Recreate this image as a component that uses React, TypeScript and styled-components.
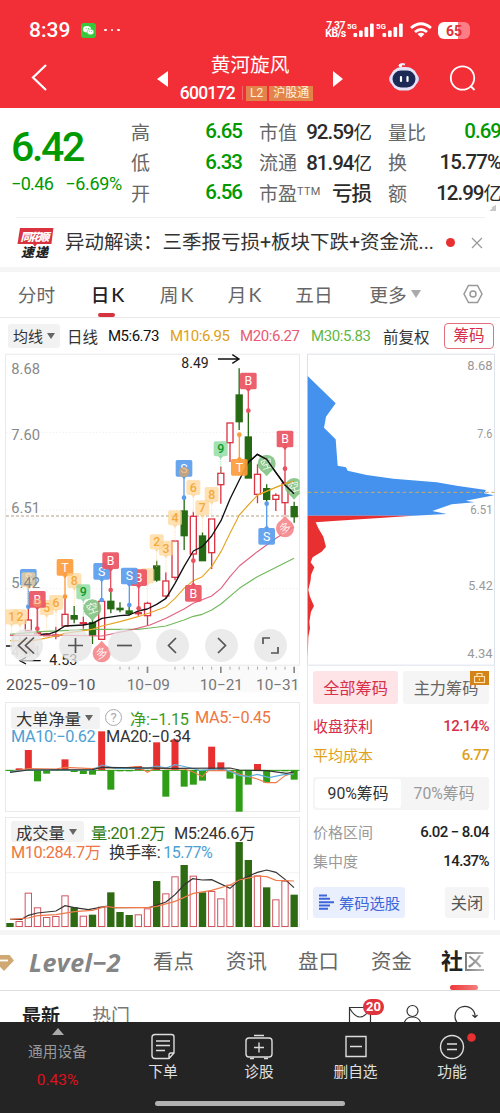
import React from "react";
import styled, { createGlobalStyle } from "styled-components";

const RED = "#e93030";
const GREEN = "#009900";

const Global = createGlobalStyle`
  * { box-sizing: border-box; }
  body {
    margin: 0;
    background: #fff;
    font-family: Roboto, "Noto Sans CJK SC", sans-serif;
    color: #333;
  }
`;

const Screen = styled.div`
  width: 500px;
  height: 1113px;
  overflow: hidden;
  background: #fff;
  display: flex;
  flex-direction: column;
  white-space: nowrap;
`;

const Num = styled.span<{ $size: number; $ls?: number; $color?: string; $weight?: number; $ml?: number }>`
  font-size: ${(p) => p.$size}px;
  letter-spacing: ${(p) => p.$ls ?? 0}px;
  color: ${(p) => p.$color ?? "inherit"};
  font-weight: ${(p) => p.$weight ?? 500};
  margin-left: ${(p) => p.$ml ?? 0}px;
`;

/* ---------- header ---------- */

const Header = styled.header`
  flex: none;
  height: 108px;
  background: #f22f37;
  color: #fff;
`;

const StatusBar = styled.div`
  height: 48px;
  padding: 12px 30px 0 29px;
  display: flex;
  align-items: center;
`;

const Clock = styled.span`
  width: 52px;
  font-size: 21px;
  font-weight: 500;
  line-height: 36px;
`;

const StatusDots = styled.span`
  margin-left: 8px;
  flex: 1;
  display: flex;
  gap: 4px;
  i { width: 2.5px; height: 2.5px; border-radius: 1.2px; background: #fff; }
`;

const Speed = styled.span`
  width: 23px;
  font-size: 10.5px;
  line-height: 8.5px;
  font-weight: 700;
  letter-spacing: -0.6px;
  text-align: center;
`;

const Battery = styled.span`
  width: 32px;
  height: 17px;
  margin-left: 6px;
  border-radius: 6px;
  background: linear-gradient(90deg, #fff 63%, #fb7d85 63%);
  color: #e03038;
  font-size: 14px;
  line-height: 18px;
  font-weight: 700;
  text-align: center;
`;

const TitleBar = styled.div`
  height: 60px;
  display: grid;
  grid-template-columns: 150px 193px 157px;
`;

const TitleSide = styled.div<{ $left: number }>`
  padding: 10px 0 0 ${(p) => p.$left}px;
`;

const TitleCenter = styled.div`
  display: grid;
  grid-template-columns: 24px 156px 13px;
`;

const Arrow = styled.i<{ $dir: "left" | "right" }>`
  align-self: center;
  margin-top: 1px;
  justify-self: ${(p) => (p.$dir === "left" ? "center" : "end")};
  border: solid transparent;
  border-width: 8px 0;
  ${(p) => (p.$dir === "left" ? "border-right: 11px solid #fff;" : "border-left: 10px solid #fff;")}
`;

const StockName = styled.div`
  display: flex;
  flex-direction: column;
  align-items: center;
  h1 { margin: 4px 0 0 -4px; font-size: 19.7px; line-height: 28px; font-weight: 400; }
`;

const StockCode = styled.div`
  display: flex;
  align-items: center;
  height: 24px;
  gap: 2px;
  margin: 1px 0 0 -11px;
`;

const Tag = styled.span`
  background: #e2834b;
  font-size: 12px;
  line-height: 15px;
  height: 15px;
  padding: 0 4px;
  color: #fff0d8;
`;

/* ---------- quote summary ---------- */

const Quote = styled.section`
  flex: none;
  height: 109px;
  display: grid;
  grid-template-columns: 131px 110px 18px 111px 18px 112px;
  grid-template-rows: 109px;
`;

const Price = styled.div`
  grid-area: 1 / 1;
  padding: 15px 0 0 11px;
  color: ${GREEN};
  display: flex;
  flex-direction: column;
`;

const Changes = styled.div`
  display: flex;
  gap: 12px;
  margin-top: 2px;
`;

const StatColumn = styled.div<{ $col: number }>`
  grid-area: 1 / ${(p) => p.$col};
  padding-top: 8px;
`;

const ExpandCorner = styled.i`
  grid-area: 1 / 6;
  place-self: end;
  margin: 0 4px 6px 0;
  width: 7px;
  height: 7px;
  background: linear-gradient(135deg, transparent 50%, #c8c8c8 50%);
`;

const Stat = styled.div<{ $good?: boolean }>`
  height: 30.5px;
  display: flex;
  justify-content: space-between;
  align-items: center;
  font-size: 19px;
  color: #666;
  sup { font-size: 11px; line-height: 0; vertical-align: 6px; letter-spacing: 0.3px; }
  b {
    font-size: 20.5px;
    letter-spacing: -1px;
    margin-right: -1px;
    font-weight: 500;
    color: ${(p) => (p.$good ? GREEN : "#2b2b2b")};
  }
  em { font-style: normal; font-size: 18.5px; font-weight: 400; }
`;

const News = styled.section`
  flex: none;
  height: 50px;
  margin: 0 15px 0 16px;
  border-top: 1px solid #eee;
  display: flex;
  align-items: center;
`;

const NewsTitle = styled.span`
  margin-left: 10px;
  width: 376px;
  font-size: 19.5px;
  line-height: 28px;
  color: #333;
`;

const RedDot = styled.i`
  width: 9px;
  height: 9px;
  border-radius: 50%;
  background: ${RED};
  margin-left: 6px;
`;

const Gap = styled.div`
  flex: none;
  height: 5px;
  background: #f5f5f5;
`;

/* ---------- period tabs and averages ---------- */

const PeriodTabs = styled.nav`
  flex: none;
  height: 46px;
  border-bottom: 1px solid #e8e8e8;
  display: grid;
  grid-template-columns: 73px 69px 69px 67px 72px 90px 66px;
`;

const PeriodTab = styled.span<{ $active?: boolean }>`
  display: flex;
  align-items: center;
  justify-content: center;
  gap: 4px;
  padding-bottom: 2px;
  font-size: 18.7px;
  color: ${(p) => (p.$active ? "#222" : "#666")};
  font-weight: ${(p) => (p.$active ? 500 : 400)};
  position: relative;
  &::after {
    content: "";
    display: ${(p) => (p.$active ? "block" : "none")};
    position: absolute;
    bottom: 0;
    left: 25px;
    width: 17px;
    height: 4px;
    border-radius: 2px;
    background: #d63340;
  }
`;

const KLetter = styled.span`
  font-family: Lato, sans-serif;
  font-size: 19.5px;
  margin: 1px 0 0 -2px;
`;

const Caret = styled.i<{ $w: number; $h: number; $color: string }>`
  border: solid transparent;
  border-width: 0 ${(p) => p.$w / 2}px;
  border-top: ${(p) => p.$h}px solid ${(p) => p.$color};
`;

const Averages = styled.div`
  flex: none;
  height: 34px;
  padding: 1px 6px 0 8px;
  display: grid;
  grid-template-columns: 59px 41px 62px 70px 71px 72px 61px 50px;
  align-items: center;
  font-size: 15.5px;
`;

const Dropdown = styled.span<{ $w: number; $size: number; $h?: number }>`
  width: ${(p) => p.$w}px;
  height: ${(p) => p.$h ?? 24}px;
  padding-left: 5px;
  background: #f2f2f2;
  border-radius: 3px;
  display: inline-flex;
  align-items: center;
  gap: 4px;
  font-size: ${(p) => p.$size}px;
`;

const ChipToggle = styled.span`
  height: 26px;
  border: 1px solid #e0707c;
  border-radius: 4px;
  color: #d62f4a;
  text-align: center;
  line-height: 24px;
  font-size: 15.5px;
`;

/* ---------- charts ---------- */

const Charts = styled.main`
  flex: none;
  height: 578px;
  display: grid;
  grid-template-columns: 306px 189px;
`;

const ChartStack = styled.div`
  display: flex;
  flex-direction: column;
`;

const Layered = styled.div<{ $h: number }>`
  height: ${(p) => p.$h}px;
  display: grid;
  > * { grid-area: 1 / 1; }
  svg { display: block; }
`;

const ChartButtons = styled.div`
  align-self: start;
  margin: 277px 0 0 10px;
  display: flex;
  gap: 15.8px;
`;

const RoundButton = styled.span`
  width: 33px;
  height: 33px;
  border-radius: 50%;
  background: rgba(228, 228, 228, 0.75);
`;

const Legend = styled.div<{ $top: number }>`
  padding: ${(p) => p.$top}px 0 0 11px;
  font-size: 16.3px;
  z-index: 1;
`;

const LegendRow = styled.div<{ $h: number }>`
  height: ${(p) => p.$h}px;
  display: flex;
  align-items: center;
`;

const LegendItem = styled.span<{ $w: number; $color: string; $ls?: number; $pl?: number }>`
  width: ${(p) => p.$w}px;
  padding-left: ${(p) => p.$pl ?? 0}px;
  color: ${(p) => p.$color};
  letter-spacing: ${(p) => p.$ls ?? -0.4}px;
`;

const Help = styled.span`
  width: 17px;
  height: 17px;
  margin: 0 8px 0 5px;
  border: 1px solid #aaa;
  border-radius: 50%;
  color: #aaa;
  font-size: 13px;
  line-height: 16px;
  text-align: center;
`;

const ChipPanel = styled.aside`
  display: flex;
  flex-direction: column;
`;

const ChipInfo = styled.div`
  margin-left: 1px;
  width: 188px;
  height: 254px;
  padding: 5px 5px 0 5px;
  border: solid #e6e9f0;
  border-width: 0 1px;
`;

const Split = styled.div<{ $h: number; $mt?: number }>`
  height: ${(p) => p.$h}px;
  margin-top: ${(p) => p.$mt ?? 0}px;
  display: flex;
  justify-content: space-between;
  align-items: center;
`;

const ChipButton = styled.span<{ $w: number; $bg: string; $color: string }>`
  position: relative;
  width: ${(p) => p.$w}px;
  height: 100%;
  padding-bottom: 2px;
  border-radius: 3px;
  background: ${(p) => p.$bg};
  color: ${(p) => p.$color};
  font-size: 16.2px;
  display: flex;
  align-items: center;
  justify-content: center;
  gap: 4px;
`;

const LockBadge = styled.i`
  position: absolute;
  right: 0;
  top: 0;
  width: 19px;
  height: 14px;
  background: #d48318;
  svg { display: block; }
`;

const ChipRow = styled(Split)<{ $color: string; $value: string }>`
  color: ${(p) => p.$color};
  font-size: 15px;
  b { font-weight: 500; color: ${(p) => p.$value}; letter-spacing: -0.6px; font-size: 15px; }
`;

const Segmented = styled.div`
  margin-top: 8px;
  height: 33px;
  padding: 2px;
  background: #f5f5f5;
  border-radius: 3px;
  display: grid;
  grid-template-columns: 86px 1fr;
  font-size: 15.8px;
  line-height: 29px;
  text-align: center;
  color: #999;
  span:first-child { background: #fff; border-radius: 3px; color: #333; }
`;

/* ---------- community and bottom bar ---------- */

const SectionTabs = styled.nav`
  flex: none;
  height: 56px;
  border-bottom: 1px solid #dedede;
  display: grid;
  grid-template-columns: 14px 122px 75px 71px 73px 73px 70px;
  align-items: center;
  text-align: center;
  font-size: 20.4px;
  line-height: 30px;
  color: #666;
  > span { padding-bottom: 1px; }
`;

const LevelTwo = styled.span`
  font-family: "Open Sans", Roboto, sans-serif;
  font-style: italic;
  font-weight: 700;
  font-size: 25px;
  color: #858585;
  letter-spacing: 0.5px;
`;

const CommunityTab = styled.span`
  position: relative;
  font-weight: 700;
  color: #222;
  font-size: 22px;
  i { font-style: normal; font-weight: 500; background: linear-gradient(90deg, #777, #bbb); -webkit-background-clip: text; color: transparent; }
  &::after {
    content: "";
    position: absolute;
    left: 22px;
    bottom: -12px;
    width: 28px;
    height: 5px;
    border-radius: 3px;
    background: linear-gradient(90deg, #ee3636, #f58080);
  }
`;

const Filters = styled.div`
  flex: none;
  height: 31px;
  overflow: hidden;
  padding: 11px 0 0 22px;
  display: grid;
  grid-template-columns: 70px 256px 54px 52px 30px;
  align-items: start;
  font-size: 19px;
  line-height: 30px;
  color: #777;
  b { color: #222; font-weight: 700; }
`;

const MailIcon = styled.span`
  position: relative;
  height: 30px;
  b {
    position: absolute;
    left: 15px;
    top: -3px;
    width: 21px;
    height: 16px;
    border-radius: 8px;
    background: #e0333c;
    color: #fff;
    font-size: 13px;
    line-height: 16px;
    text-align: center;
  }
`;

const BottomBar = styled.footer`
  flex: none;
  height: 91px;
  background: #242424;
  color: #e0e0e0;
  display: grid;
  grid-template-columns: 115px 96px 96px 97px 96px;
  grid-template-rows: 77px 14px;
`;

const BottomItem = styled.div`
  display: flex;
  flex-direction: column;
  align-items: center;
  padding-top: 9px;
  font-size: 14.7px;
  line-height: 24px;
  svg { display: block; height: 29px; overflow: visible; }
`;

const IndexTicker = styled.div`
  display: flex;
  flex-direction: column;
  align-items: center;
  padding-top: 6px;
  color: #999;
  font-size: 14.7px;
  line-height: 22px;
  i { border: solid transparent; border-width: 0 6px; border-bottom: 7px solid #aaa; }
  span { margin-top: 6px; }
  em { font-style: normal; color: #e0101c; margin-top: 6px; font-size: 15.5px; line-height: 22px; }
`;

const HomeIndicator = styled.div`
  grid-column: 1 / -1;
  justify-self: center;
  margin-top: 2px;
  width: 190px;
  height: 5px;
  border-radius: 3px;
  background: #b2b2b2;
`;

/* ---------- chart data, drawn at three units per pixel ---------- */

const cx = (i: number) => 30 + 27.5 * i;

type Candle = [number, boolean, number, number, number, number];
const candles: Candle[] = [
  [2, true, 810, 842, 770, 842],
  [3, true, 848, 851, 780, 851],
  [4, true, 853, 857, 850, 858],
  [5, true, 855, 858, 830, 868],
  [6, true, 793, 828, 742, 828],
  [7, false, 797, 807, 768, 820],
  [8, true, 818, 821, 800, 836],
  [9, false, 818, 855, 810, 882],
  [10, true, 754, 868, 754, 868],
  [11, false, 754, 776, 722, 790],
  [12, false, 775, 779, 757, 787],
  [13, false, 783, 790, 768, 796],
  [14, true, 788, 791, 772, 797],
  [15, true, 760, 797, 755, 828],
  [16, false, 648, 690, 632, 695],
  [17, true, 693, 738, 667, 745],
  [18, true, 573, 682, 573, 691],
  [19, false, 483, 557, 445, 600],
  [20, true, 499, 612, 485, 628],
  [21, false, 558, 632, 547, 632],
  [22, true, 507, 608, 507, 657],
  [23, true, 370, 404, 350, 461],
  [24, true, 219, 278, 219, 336],
  [25, false, 135, 215, 55, 240],
  [26, false, 261, 384, 182, 384],
  [27, true, 373, 433, 343, 460],
  [28, false, 416, 448, 403, 455],
  [29, true, 436, 448, 430, 483],
  [30, true, 400, 458, 356, 496],
  [31, false, 470, 500, 455, 518],
];

const orders = [333, 325, 270, 364, 341, 327, 298, 336, 342, 344, 214, 389, 334, 334, 318, 331, 247, 410, 238, 380, 374, 362, 260, 307, 356, 455, 374, 312, 368, 331, 334, 359];
const volumes = [339, 333, 248, 292, 321, 318, 256, 292, 317, 314, 290, 247, 306, 315, 313, 295, 213, 250, 199, 165, 197, 247, 243, 265, 224, 96, 150, 196, 232, 268, 212, 254];
const falling = new Set([0, 7, 9, 11, 12, 13, 16, 19, 21, 25, 26, 28, 31]);

const pts = (a: number[][]) => a.map((p) => p.join(",")).join(" ");

const ma5 = [[122, 853], [150, 851], [168, 845], [195, 828], [250, 825], [277, 820], [306, 805], [360, 797], [388, 795], [414, 783], [442, 777], [470, 763], [498, 745], [525, 700], [552, 650], [580, 603], [607, 590], [635, 558], [663, 512], [690, 447], [718, 390], [745, 337], [772, 313], [800, 328], [828, 368], [855, 405], [882, 431]];
const ma10 = [[30, 872], [85, 874], [120, 868], [168, 858], [195, 850], [277, 838], [306, 828], [360, 815], [414, 800], [450, 788], [498, 770], [525, 745], [552, 715], [580, 692], [607, 680], [635, 650], [663, 605], [690, 550], [718, 495], [745, 465], [772, 436], [800, 424], [828, 412], [855, 401], [882, 393]];
const ma20 = [[30, 856], [200, 856], [306, 858], [400, 838], [450, 825], [498, 805], [552, 777], [580, 760], [635, 738], [663, 715], [690, 680], [718, 648], [772, 605], [828, 565], [882, 530]];
const ma30 = [[30, 853], [120, 845], [277, 838], [414, 838], [450, 834], [498, 828], [552, 810], [580, 799], [607, 793], [635, 780], [663, 762], [718, 715], [772, 680], [882, 625]];

const ChartText = ({ x, y, w, s = 46, c = "#888", children, weight = 400 }: { x: number; y: number; w: number; s?: number; c?: string; children: string; weight?: number }) => (
  <text x={x} y={y} fontSize={s} fill={c} fontWeight={weight} textLength={w} lengthAdjust="spacingAndGlyphs">{children}</text>
);

const Pin = ({ x, y, c, t, dot, up }: { x: number; y: number; c: string; t: string; dot?: number; up?: boolean }) => (
  <g>
    {dot && <path d={`M${x} ${y} V${dot}`} stroke={c} strokeWidth="4" />}
    {dot && <circle cx={x} cy={dot} r="7" fill={c} />}
    <path d={up ? `M${x - 8} ${y - 24} l8 -9 8 9z` : `M${x - 8} ${y + 24} l8 9 8 -9z`} fill={c} />
    <rect x={x - 25} y={y - 25} width="50" height="50" rx="5" fill={c} opacity="0.92" />
    <text x={x} y={y + 13} fontSize="37" fill="#fff" textAnchor="middle">{t}</text>
  </g>
);

const Count = ({ x, y, t, c = "#f5a93a", bg = "#ffd493" }: { x: number; y: number; t: string; c?: string; bg?: string }) => (
  <g>
    <path d={`M${x} ${y + 22} V${y + 75}`} stroke={bg} strokeWidth="2" strokeDasharray="4 3" />
    <path d={`M${x - 8} ${y + 20} l8 10 8 -10z`} fill={bg} opacity="0.75" />
    <rect x={x - 21} y={y - 23} width="42" height="45" rx="6" fill={bg} opacity="0.7" />
    <text x={x} y={y + 13} fontSize="37" fontWeight="500" fill={c} textAnchor="middle">{t}</text>
  </g>
);

const Seal = ({ x, y, t, c, up }: { x: number; y: number; t: string; c: string; up?: boolean }) => (
  <g opacity="0.82">
    <circle cx={x} cy={y} r="27" fill={c} />
    <path d={up ? `M${x - 16} ${y - 20} L${x} ${y - 38} L${x + 16} ${y - 20}z` : `M${x - 18} ${y + 18} L${x} ${y + 38} L${x + 18} ${y + 18}z`} fill={c} />
    <text x={x} y={y + 13} fontSize="36" fill="#fff" opacity="0.85" textAnchor="middle" transform={`rotate(-18 ${x} ${y})`}>{t}</text>
  </g>
);

const SRED = "#ea5262";
const SBLUE = "#5a9ded";
const SORANGE = "#fd9b3a";
const SGREEN = "#77bd77";
const SPINK = "#f57b80";

const KLine = () => (
  <svg width="300" height="348" viewBox="0 6 900 1044">
    <defs>
      <linearGradient id="axis" x1="0" x2="1"><stop offset="0" stopColor="#fff" /><stop offset="0.3" stopColor="#f7f7f7" /><stop offset="1" stopColor="#fbfbfb" /></linearGradient>
      <clipPath id="plot"><rect x="16" y="12" width="883" height="935" /></clipPath>
    </defs>
    <rect x="16" y="947" width="882" height="80" fill="url(#axis)" />
    <rect x="16.5" y="12.5" width="882" height="933" fill="none" stroke="#e9e9e9" strokeWidth="3" />
    <path d="M18 247H897M18 480H897M18 716H897" stroke="#eee" strokeWidth="3" strokeDasharray="4 6" />
    <path d="M18 498H897" stroke="#b3a184" strokeWidth="3" strokeDasharray="9 6" />
    <g clipPath="url(#plot)">
      {candles.map(([i, rise, top, bottom, high, low]) => (
        <g key={i} stroke={rise ? "#dc3545" : "#266a14"} strokeWidth="4">
          <path d={`M${cx(i)} ${high}V${top}M${cx(i)} ${bottom}V${low}`} />
          <rect x={cx(i) - 9} y={top} width="18" height={bottom - top} fill={rise ? "#fff" : "#266a14"} />
        </g>
      ))}
      <g fill="none" strokeWidth="3.4" strokeLinejoin="round">
        <polyline points={pts(ma30)} stroke="#72b95c" />
        <polyline points={pts(ma20)} stroke="#e06280" />
        <polyline points={pts(ma10)} stroke="#e5a524" />
        <polyline points={pts(ma5)} stroke="#111" strokeWidth="4" />
      </g>
      <Pin x={85} y={682} c={SBLUE} t="S" dot={770} />
      <Count x={85} y={690} t="" />
      <Count x={35} y={801} t="1" />
      <Count x={60} y={801} t="2" />
      <Count x={140} y={773} t="5" />
      <Count x={168} y={758} t="6" />
      <Pin x={112} y={748} c={SRED} t="B" dot={836} />
      <circle cx="112" cy="758" r="14" fill="#f8a05c" opacity="0.5" />
      <Pin x={195} y={652} c={SORANGE} t="T" dot={740} />
      <Count x={223} y={692} t="8" />
      <Count x={250} y={726} t="9" c="#0b9b24" bg="#7ed493" />
      <Seal x={277} y={775} t="空" c={SGREEN} />
      <Pin x={305} y={664} c={SBLUE} t="S" dot={750} />
      <Pin x={332} y={632} c={SRED} t="B" dot={720} />
      <Count x={442} y={678} t="" />
      <Pin x={416} y={683} c={SRED} t="B" dot={775} />
      <Pin x={388} y={678} c={SBLUE} t="S" dot={765} />
      <Seal x={305} y={910} t="多" c={SPINK} up />
      <Count x={470} y={576} t="2" />
      <Count x={498} y={595} t="3" />
      <Count x={525} y={504} t="4" />
      <Pin x={552} y={355} c={SBLUE} t="S" dot={443} />
      <circle cx="552" cy="366" r="16" fill="#e2a45c" opacity="0.7" />
      <Count x={580} y={413} t="6" />
      <Count x={607} y={474} t="7" />
      <Count x={635} y={434} t="8" />
      <Count x={662} y={297} t="9" c="#0b9b24" bg="#7ed493" />
      <Pin x={745} y={93} c={SRED} t="B" dot={182} />
      <Pin x={718} y={352} c={SORANGE} t="T" dot={254} up />
      <Pin x={580} y={730} c={SRED} t="B" dot={632} up />
      <Pin x={855} y={267} c={SRED} t="B" dot={356} />
      <Seal x={800} y={341} t="空" c={SGREEN} />
      <Seal x={882} y={411} t="空" c={SGREEN} />
      <Pin x={800} y={559} c={SBLUE} t="S" dot={461} up />
      <Seal x={855} y={535} t="多" c={SPINK} up />
      <polyline points={pts(ma5.slice(21))} fill="none" stroke="#111" strokeWidth="4" />
      <polyline points={pts(ma10.slice(20))} fill="none" stroke="#e5a524" strokeWidth="3.4" />
      <g opacity="0.5">
        <circle cx="78" cy="888" r="27" fill="#f4c3c3" />
        <path d="M40 858v34M60 856v20" stroke="#bbb" strokeWidth="6" />
      </g>
    </g>
    <ChartText x={34} y={72} w={86}>8.68</ChartText>
    <ChartText x={34} y={269} w={86}>7.60</ChartText>
    <ChartText x={34} y={490} w={86}>6.51</ChartText>
    <ChartText x={34} y={713} w={86}>5.42</ChartText>
    <g opacity="0.45"><ChartText x={34} y={920} w={86}>4.34</ChartText></g>
    <ChartText x={148} y={945} w={84} s={42} c="#222">4.53</ChartText>
    <ChartText x={544} y={55} w={82} s={42} c="#222">8.49</ChartText>
    <path d="M122 932H60M78 922L60 932 78 942M18 888H36" stroke="#111" strokeWidth="4" fill="none" />
    <path d="M654 27H715M697 14L717 27 697 40" stroke="#111" strokeWidth="4" fill="none" />
    {Array.from({ length: 20 }, (_, k) => k + 12).filter((k) => k !== 16 && k !== 17).map((k) => {
      const major = k === 15 || k === 23 || k === 31;
      return <path key={k} d={`M${cx(k)} 950V${major ? 969 : 959}`} stroke={major ? "#888" : "#aaa"} strokeWidth={major ? 5 : 3} />;
    })}
    <ChartText x={18} y={1021} w={268} s={44} c="#555">2025−09−10</ChartText>
    <ChartText x={380} y={1021} w={130} s={44} c="#777">10−09</ChartText>
    <ChartText x={599} y={1021} w={130} s={44} c="#777">10−21</ChartText>
    <ChartText x={768} y={1021} w={130} s={44} c="#777">10−31</ChartText>
  </svg>
);

const buttonIcons = [
  "M17 8.5L8.5 16.5 17 24.5M24 8.5L15.5 16.5 24 24.5",
  "M9 16.5H24M16.5 9V24",
  "M9 16.5H24",
  "M20 9L12.5 16.5 20 24",
  "M13 9L20.5 16.5 13 24",
  "M9 15V9H16M24 18V24H17",
];

const OrderChart = () => (
  <svg width="300" height="115" viewBox="0 120 900 345">
    <rect x="16.5" y="127.5" width="882" height="327" fill="none" stroke="#e9e9e9" strokeWidth="3" />
    {orders.map((v, i) => (
      <rect key={i} x={cx(i) - 10.5} y={Math.min(v, 330)} width="21" height={Math.abs(v - 330)} fill={v < 330 ? RED : "#2f9e16"} />
    ))}
    <path d="M16 331H898" stroke="#2f9e16" strokeWidth="3" />
    <g fill="none" strokeWidth="3.4">
      <polyline points="30,336 85,326 168,327 195,322 277,326 306,322 360,325 415,319 442,337 470,322 500,327 552,327 580,336 607,350 625,332 690,332 720,343 772,357 800,368 828,368 855,347 882,338" stroke="#ee7a49" />
      <polyline points="30,335 85,330 277,330 306,315 345,325 442,325 470,318 498,324 525,314 560,321 600,331 670,326 718,346 745,350 772,343 808,353 850,344 882,342" stroke="#60aedb" />
      <polyline points="30,337 85,330 277,329 306,322 525,325 690,324 718,330 800,332 860,340 882,336" stroke="#333" />
    </g>
  </svg>
);

const VolumeChart = () => (
  <svg width="300" height="115" viewBox="0 15 900 345">
    <rect x="16.5" y="22.5" width="882" height="328" fill="none" stroke="#e9e9e9" strokeWidth="3" />
    <path d="M18 188H897" stroke="#f3f3f3" strokeWidth="3" />
    {volumes.map((v, i) =>
      falling.has(i) ? (
        <rect key={i} x={cx(i) - 11} y={v} width="22" height={351 - v} fill="#2d6a12" />
      ) : (
        <rect key={i} x={cx(i) - 9.5} y={v + 1.5} width="19" height={348 - v} fill="#fff" stroke="#cf5560" strokeWidth="3" />
      ),
    )}
    <g fill="none" strokeWidth="3.6">
      <polyline points="30,328 65,328 85,316 112,309 168,303 195,287 223,293 265,299 318,289 345,293 450,292 498,276 525,254 552,225 578,206 607,210 635,209 690,235 718,211 772,187 800,180 828,187 855,208 882,233" stroke="#333" />
      <polyline points="30,328 85,324 112,317 168,314 223,305 277,301 318,289 345,293 442,293 470,289 525,274 580,250 635,241 690,225 718,210 772,198 800,200 828,211 882,213" stroke="#ee7a49" />
    </g>
  </svg>
);

const ChipChart = () => (
  <svg width="189" height="314" viewBox="18 6 567 942">
    <rect x="22.5" y="12.5" width="561" height="933" fill="none" stroke="#dde2ea" strokeWidth="3" />
    <polygon points="23,78 107,160 78,200 72,233 107,268 113,347 138,352 143,362 200,375 280,386 410,397 470,407 558,420 552,430 582,436 497,452 523,457 455,463 397,483 440,492 340,497 23,497" fill="#4491ee" />
    <polygon points="23,497 340,497 250,503 100,513 47,517 55,535 70,560 78,590 65,605 38,622 32,637 43,652 33,675 32,690 25,720 30,740 42,768 33,785 28,815 30,835 25,860 23,925" fill={RED} />
    <path d="M23 427H583" stroke="#c9ab68" strokeWidth="3" strokeDasharray="11 8" />
    <ChartText x={502} y={60} w={76} s={39} c="#999">8.68</ChartText>
    <ChartText x={532} y={264} w={45} s={39} c="#999">7.6</ChartText>
    <ChartText x={511} y={493} w={67} s={39} c="#999">6.51</ChartText>
    <ChartText x={505} y={721} w={73} s={39} c="#999">5.42</ChartText>
    <ChartText x={502} y={924} w={76} s={39} c="#999">4.34</ChartText>
  </svg>
);

const Signal = () => (
  <svg width="29" height="18" viewBox="0 0 29 18" fill="#fff">
    <text x="0" y="7.5" fontSize="8" fontWeight="700">5G</text>
    <rect x="6.5" y="12" width="3.7" height="4" rx="1" />
    <rect x="12" y="9.5" width="3.7" height="6.5" rx="1" />
    <rect x="17.5" y="6" width="3.7" height="10" rx="1" />
    <rect x="23" y="2.5" width="3.7" height="13.5" rx="1" />
  </svg>
);

export default function App() {
  return (
    <Screen>
      <Global />
      <Header>
        <StatusBar>
          <Clock>8:39</Clock>
          <svg width="15" height="15" viewBox="0 0 15 15">
            <rect width="15" height="15" rx="3" fill="#37c83c" />
            <ellipse cx="6" cy="6.3" rx="4" ry="3.3" fill="#fff" />
            <ellipse cx="9.5" cy="9" rx="3.4" ry="2.7" fill="#fff" stroke="#37c83c" strokeWidth="0.5" />
            <path d="M4.7 5.5h.8M7 5.5h.8M8.3 8.5h.6M10.3 8.5h.6" stroke="#37c83c" />
          </svg>
          <StatusDots><i /><i /><i /></StatusDots>
          <Speed>7.37<br />KB/s</Speed>
          <Signal />
          <Signal />
          <svg width="27" height="16" viewBox="-5 0 27 16" fill="none" stroke="#fff" strokeWidth="2.8">
            <path d="M1 6Q11-2.5 21 6M5 10Q11 5 17 10" />
            <path d="M7.5 12Q11 9.5 14.5 12L11 15.5z" fill="#fff" stroke="none" />
          </svg>
          <Battery>65</Battery>
        </StatusBar>
        <TitleBar>
          <TitleSide $left={30}>
            <svg width="20" height="40" viewBox="0 0 20 40" fill="none" stroke="#fff" strokeWidth="2.2"><path d="M16 7L3 19.5 16 32" /></svg>
          </TitleSide>
          <TitleCenter>
            <Arrow $dir="left" />
            <StockName>
              <h1>黄河旋风</h1>
              <StockCode>
                <Num $size={17.5} $ls={-0.75} $weight={500}>600172</Num>
                <svg width="7" height="14"><path d="M5.5 0V14" stroke="#f8686a" /></svg>
                <Tag>L2</Tag>
                <Tag>沪股通</Tag>
              </StockCode>
            </StockName>
            <Arrow $dir="right" />
          </TitleCenter>
          <TitleSide $left={45}>
            <svg width="90" height="36" viewBox="388 58 90 36">
              <path d="M399.5 66q1-3 5.5-1.5" stroke="#e9e6fb" strokeWidth="2" fill="none" />
              <circle cx="400.5" cy="65.5" r="1.8" fill="#fff" />
              <rect x="389" y="73" width="30" height="12" rx="6" fill="#cdcdf5" />
              <rect x="390.5" y="67" width="27" height="23.5" rx="11.5" fill="#e6e4fb" />
              <rect x="392.5" y="70.5" width="23" height="17" rx="8.5" fill="#1d2a56" />
              <path d="M401 77v4M407.5 77v4" stroke="#fff" strokeWidth="2.2" strokeLinecap="round" />
              <circle cx="462.5" cy="78" r="11.7" fill="none" stroke="#fff" strokeWidth="1.8" />
              <path d="M470.5 86l4 4" stroke="#fff" strokeWidth="1.8" />
            </svg>
          </TitleSide>
        </TitleBar>
      </Header>

      <Quote>
        <Price>
          <Num $size={41} $ls={-2.3}>6.42</Num>
          <Changes>
            <Num $size={18} $ls={-0.65} $weight={400}>−0.46</Num>
            <Num $size={18} $ls={-0.3} $weight={400}>−6.69%</Num>
          </Changes>
        </Price>
        <StatColumn $col={2}>
          <Stat $good>高<b>6.65</b></Stat>
          <Stat $good>低<b>6.33</b></Stat>
          <Stat $good>开<b>6.56</b></Stat>
        </StatColumn>
        <StatColumn $col={4}>
          <Stat>市值<b>92.59<em>亿</em></b></Stat>
          <Stat>流通<b>81.94<em>亿</em></b></Stat>
          <Stat><span>市盈<sup>TTM</sup></span><b>亏损</b></Stat>
        </StatColumn>
        <StatColumn $col={6}>
          <Stat $good>量比<b>0.69</b></Stat>
          <Stat>换<b>15.77%</b></Stat>
          <Stat>额<b>12.99<em>亿</em></b></Stat>
        </StatColumn>
        <ExpandCorner />
      </Quote>

      <News>
        <svg width="39" height="32" viewBox="0 0 39 32" fontWeight="900" fontStyle="italic">
          <path d="M4 1H37.5L35.5 17H21l-2 3-2-3H1.5z" fill="#d9333f" />
          <text x="4.5" y="13.5" fontSize="11" fill="#fff" textLength="29">同花顺</text>
          <text x="5" y="30.5" fontSize="13" fill="#222" textLength="27">速递</text>
        </svg>
        <NewsTitle>异动解读：三季报亏损+板块下跌+资金流...</NewsTitle>
        <RedDot />
        <svg width="30" height="12" viewBox="0 0 30 12" stroke="#999" strokeWidth="1.2"><path d="M17 1l10 10M27 1L17 11" /></svg>
      </News>
      <Gap />

      <PeriodTabs>
        <PeriodTab>分时</PeriodTab>
        <PeriodTab $active>日<KLetter>K</KLetter></PeriodTab>
        <PeriodTab>周<KLetter>K</KLetter></PeriodTab>
        <PeriodTab>月<KLetter>K</KLetter></PeriodTab>
        <PeriodTab>五日</PeriodTab>
        <PeriodTab>更多<Caret $w={10} $h={8} $color="#aaa" /></PeriodTab>
        <PeriodTab>
          <svg width="20" height="20" viewBox="0 0 20 20" fill="none" stroke="#999" strokeWidth="1.5"><path d="M5.5 1.5h9L19 10l-4.5 8.5h-9L1 10z" /><circle cx="10" cy="10" r="3" /></svg>
        </PeriodTab>
      </PeriodTabs>

      <Averages>
        <Dropdown $w={52} $size={15}>均线<Caret $w={8} $h={6} $color="#666" /></Dropdown>
        <span>日线</span>
        <Num $size={15} $ls={-0.5} $color="#111" $weight={400}>M5:6.73</Num>
        <Num $size={15} $ls={-0.4} $color="#e0a018" $weight={400}>M10:6.95</Num>
        <Num $size={15} $ls={-0.4} $color="#e75a76" $weight={400}>M20:6.27</Num>
        <Num $size={15} $ls={-0.4} $color="#5fb844" $weight={400}>M30:5.83</Num>
        <span>前复权</span>
        <ChipToggle>筹码</ChipToggle>
      </Averages>

      <Charts>
        <ChartStack>
          <Layered $h={348}>
            <KLine />
            <ChartButtons>
              {buttonIcons.map((d) => (
                <RoundButton key={d}>
                  <svg width="33" height="33" viewBox="0 0 33 33" fill="none" stroke="#555" strokeWidth="1.7"><path d={d} /></svg>
                </RoundButton>
              ))}
            </ChartButtons>
          </Layered>
          <Layered $h={115}>
            <OrderChart />
            <Legend $top={7}>
              <LegendRow $h={21}>
                <Dropdown $w={89} $size={16.3} $h={22}>大单净量<Caret $w={8} $h={6} $color="#666" /></Dropdown>
                <Help>?</Help>
                <LegendItem $w={65} $color="#3a9a1c">净:−1.15</LegendItem>
                <LegendItem $w={80} $color="#ee7642">MA5:−0.45</LegendItem>
              </LegendRow>
              <LegendRow $h={17}>
                <LegendItem $w={95} $color="#4da0d4">MA10:−0.62</LegendItem>
                <LegendItem $w={90} $color="#333">MA20:−0.34</LegendItem>
              </LegendRow>
            </Legend>
          </Layered>
          <Layered $h={115}>
            <VolumeChart />
            <Legend $top={6}>
              <LegendRow $h={21}>
                <Dropdown $w={73} $size={16.3} $h={21}>成交量<Caret $w={8} $h={6} $color="#666" /></Dropdown>
                <LegendItem $w={90} $pl={7} $color="#2d7a12">量:201.2万</LegendItem>
                <LegendItem $w={90} $color="#333">M5:246.6万</LegendItem>
              </LegendRow>
              <LegendRow $h={17}>
                <LegendItem $w={98} $color="#ee7642">M10:284.7万</LegendItem>
                <LegendItem $w={115} $color="#333">换手率:<Num $size={16} $weight={400} $ls={-0.5} $ml={3} $color="#4da0d4">15.77%</Num></LegendItem>
              </LegendRow>
            </Legend>
          </Layered>
        </ChartStack>

        <ChipPanel>
          <ChipChart />
          <ChipInfo>
            <Split $h={33}>
              <ChipButton $w={85} $bg="#fee4e6" $color="#d62f4a">全部筹码</ChipButton>
              <ChipButton $w={86} $bg="#f5f5f5" $color="#666">
                主力筹码
                <LockBadge>
                  <svg width="19" height="14" viewBox="0 0 19 14" fill="none" stroke="#ffe2ae" strokeWidth="1.1"><rect x="4.5" y="5.5" width="10" height="6" /><path d="M7 5.5V2.5h5v3M9.5 7.5v2" /></svg>
                </LockBadge>
              </ChipButton>
            </Split>
            <ChipRow $h={29} $mt={7} $color="#d62f4a" $value="#d62f4a">收盘获利<b>12.14%</b></ChipRow>
            <ChipRow $h={29} $color="#e0a018" $value="#e0a018">平均成本<b>6.77</b></ChipRow>
            <Segmented><span>90%筹码</span><span>70%筹码</span></Segmented>
            <ChipRow $h={29} $mt={7} $color="#999" $value="#222">价格区间<b>6.02 − 8.04</b></ChipRow>
            <ChipRow $h={29} $color="#999" $value="#222">集中度<b>14.37%</b></ChipRow>
            <Split $h={31} $mt={12}>
              <ChipButton $w={92} $bg="#e9effd" $color="#3e66da">
                <svg width="17" height="16" viewBox="0 0 17 16" stroke="#3e66da" strokeWidth="2"><path d="M1 1.5h8M1 4.8h11M1 8.2h15M1 11.5h11M1 14.8h9" /></svg>
                <Num $size={15.3} $weight={400}>筹码选股</Num>
              </ChipButton>
              <ChipButton $w={44} $bg="#f5f5f5" $color="#555">关闭</ChipButton>
            </Split>
          </ChipInfo>
        </ChipPanel>
      </Charts>
      <Gap />

      <SectionTabs>
        <svg width="14" height="18" viewBox="0 0 14 18"><path d="M-4 1H9.5L14 6.5 4 17-6 6.5z" fill="#cfa873" /><path d="M-1 6.5h9" stroke="#fff" strokeWidth="1.8" /></svg>
        <LevelTwo>Level−2</LevelTwo>
        <span>看点</span>
        <span>资讯</span>
        <span>盘口</span>
        <span>资金</span>
        <CommunityTab>社<i>区</i></CommunityTab>
      </SectionTabs>
      <Filters>
        <b>最新</b>
        <span>热门</span>
        <MailIcon>
          <svg width="24" height="30" viewBox="0 0 24 30" fill="none" stroke="#333" strokeWidth="1.2"><path d="M1.5 30V5.5h21V30M1.5 6q5 9 10.5 9t10.5-9" /></svg>
          <b>20</b>
        </MailIcon>
        <svg width="22" height="30" viewBox="0 0 22 30" fill="none" stroke="#333" strokeWidth="1.2"><circle cx="10.5" cy="9" r="5.5" /><path d="M1.5 24q1-9 9-9t9 9" /></svg>
        <svg width="26" height="30" viewBox="0 0 26 30" fill="none" stroke="#333" strokeWidth="1.2"><path d="M4 21.5A10 10 0 1 1 21 15M18.5 13l2.5 2.5 2.5-2.5" /></svg>
      </Filters>

      <BottomBar>
        <IndexTicker><i /><span>通用设备</span><em>0.43%</em></IndexTicker>
        <BottomItem>
          <svg width="24" height="29" viewBox="0 0 24 29" fill="none" stroke="#ddd" strokeWidth="1.4"><path d="M4 3.5H20.5a2.5 2.5 0 0 1 2.5 2.5V22l-5 5.5H4a3 3 0 0 1-3-3V6.5a3 3 0 0 1 3-3zM23 22h-3q-2 0-2 2V27M5 10h14M5 14.5h14M5 19.5h9" /></svg>
          下单
        </BottomItem>
        <BottomItem>
          <svg width="28" height="29" viewBox="0 0 28 29" fill="none" stroke="#ddd" strokeWidth="1.4"><rect x="1" y="7" width="26" height="19" rx="3" /><path d="M9 4.5h10M14 11.5v10M9 16.5h10M5 27.5h4M19 27.5h4" /></svg>
          诊股
        </BottomItem>
        <BottomItem>
          <svg width="22" height="29" viewBox="0 0 22 29" fill="none" stroke="#ddd" strokeWidth="1.4"><path d="M1 5.5h20v20H1zM5 15.5h12" /></svg>
          删自选
        </BottomItem>
        <BottomItem>
          <svg width="26" height="29" viewBox="0 0 26 29" fill="none" stroke="#ddd" strokeWidth="1.4"><circle cx="13" cy="16" r="11.5" /><path d="M8 13h10M8 18.5h10" /><circle cx="32.5" cy="6.5" r="4.3" fill={RED} stroke="none" /></svg>
          功能
        </BottomItem>
        <HomeIndicator />
      </BottomBar>
    </Screen>
  );
}
